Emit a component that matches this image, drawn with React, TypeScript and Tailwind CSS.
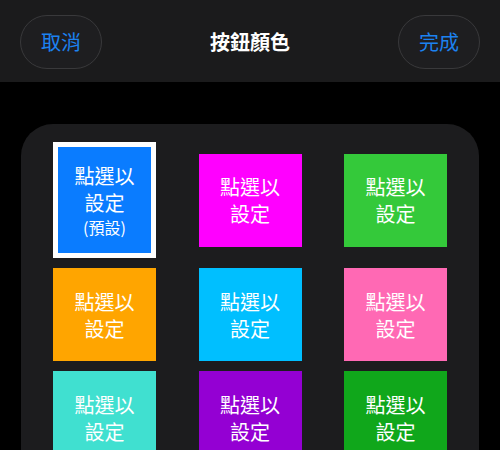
const font = { fontFamily: '"Noto Sans CJK TC", "Noto Sans", sans-serif' };

const swatches = [
  { color: "bg-[#0a7cff]", selected: true },
  { color: "bg-[#ff00ff]" },
  { color: "bg-[#34c93a]" },
  { color: "bg-[#ffa500]" },
  { color: "bg-[#00bfff]" },
  { color: "bg-[#ff69b4]" },
  { color: "bg-[#40e0d0]" },
  { color: "bg-[#9400d3]" },
  { color: "bg-[#10a71b]" },
];

function Swatch({ color, selected }: { color: string; selected?: boolean }) {
  return (
    <div
      className={`${color} w-[103px] flex flex-col items-center justify-center text-white text-[20px] leading-[27px] ${
        selected ? "h-[116px] border-[5px] border-white" : "h-[93px]"
      }`}
    >
      <span>點選以</span>
      <span>設定</span>
      {selected && <span className="text-[16px] leading-[22px]">(預設)</span>}
    </div>
  );
}

export default function App() {
  return (
    <div className="w-[500px] h-[450px] bg-black overflow-hidden" style={font}>
      <div className="h-[82px] bg-[#1b1b1c] flex items-start justify-between px-5 pt-[15px]">
        <button className="w-[82px] h-[54px] rounded-full border border-[#39393b] bg-[#1e1e20] text-[#1c82f0] text-[20px]">
          取消
        </button>
        <div className="h-[54px] flex items-center text-white text-[20px] font-semibold">按鈕顏色</div>
        <button className="w-[82px] h-[54px] rounded-full border border-[#39393b] bg-[#1e1e20] text-[#1c82f0] text-[20px]">
          完成
        </button>
      </div>
      <div className="mt-[42px] mx-[21px] rounded-[32px] bg-[#1c1c1e] px-8 pt-[18px] pb-8">
        <div className="grid grid-cols-3 gap-y-[10px] justify-between items-center" style={{ gridTemplateColumns: "repeat(3, 103px)" }}>
          {swatches.map((s, i) => (
            <div key={i} className={i % 3 === 0 ? "justify-self-start" : i % 3 === 1 ? "justify-self-center" : "justify-self-end"}>
              <Swatch color={s.color} selected={s.selected} />
            </div>
          ))}
        </div>
      </div>
    </div>
  );
}
